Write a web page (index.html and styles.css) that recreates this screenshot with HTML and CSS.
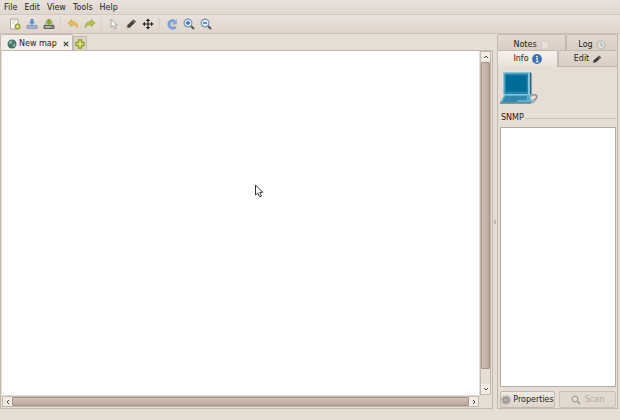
FILE: index.html
```html
<!DOCTYPE html>
<html lang="en">
<head>
  <meta charset="UTF-8" />
  <meta name="viewport" content="width=device-width, initial-scale=1.0" />
  <title>New map</title>
  <link rel="stylesheet" href="styles.css">
</head>
<body>

<nav class="menubar">
  <button>File</button>
  <button>Edit</button>
  <button>View</button>
  <button>Tools</button>
  <button>Help</button>
</nav>

<div class="toolbar">
  <button aria-label="New">
    <svg viewBox="0 0 12 12"><path d="M1.500 1h7.500v10h-7.500z" fill="#fafaf7" stroke="#aaa69e"/><path d="M3 3h4M3 5h3" stroke="#d2cfc9"/><circle cx="8.500" cy="8.500" r="3" fill="#9aa63a"/><path d="M8.500 7v3M7 8.500h3" stroke="#eef0b0"/></svg>
  </button>
  <button aria-label="Open">
    <svg viewBox="0 0 12 12"><path d="M1 7.500h10v3H1z" fill="#9fb4d2" stroke="#8d9cb2"/><path d="M1.500 7l2-3h5l2 3z" fill="#c9d7e8"/><path d="M4.500 1h3v3H9L6 7 3 4h1.500z" fill="#5f8cc8"/></svg>
  </button>
  <button aria-label="Save">
    <svg viewBox="0 0 12 12"><path d="M1 7.500h10v3H1z" fill="#8d9188" stroke="#5d6156"/><path d="M1.500 7l1.500-5h6l1.500 5z" fill="#b5bda0"/><path d="M4.500 1h3v3H9L6 7 3 4h1.500z" fill="#87a32c"/><path d="M2.500 9h5" stroke="#d8dccb"/></svg>
  </button>
  <span class="separator"></span>
  <button aria-label="Undo">
    <svg viewBox="0 0 12 12"><path d="M1 5l4-3.500v2.300c4 0 6 1.500 5.500 6.200C9.500 7.500 8 6.600 5 6.600v2.200z" fill="#e9bd4b" stroke="#d1a548" stroke-width=".7"/></svg>
  </button>
  <button aria-label="Redo">
    <svg viewBox="0 0 12 12"><path d="M11 5L7 1.500v2.300c-4 0-6 1.500-5.500 6.200C2.500 7.500 4 6.600 7 6.600v2.200z" fill="#b5c13f" stroke="#97a53d" stroke-width=".7"/></svg>
  </button>
  <span class="separator"></span>
  <button aria-label="Select">
    <svg viewBox="0 0 12 12"><path d="M3 1v8.500l2-1.800 1.500 3.300 1.700-.8-1.500-3.100h2.600z" fill="#f7f5f2" stroke="#a29d95" stroke-width=".9"/></svg>
  </button>
  <button aria-label="Draw">
    <svg viewBox="0 0 12 12"><path d="M1.500 10.500l1-3.500L8.500 1.500l2.500 2.300L5 9.500z" fill="#45413b"/><path d="M7.500 2.500l2.500 2.300" stroke="#9c978f"/><path d="M1.500 10.500l.6-2 1.400 1.400z" fill="#d8b98e"/></svg>
  </button>
  <button aria-label="Move">
    <svg viewBox="0 0 12 12"><path d="M6 2v8M2 6h8" stroke="#25221f" stroke-width="1.200"/><path d="M6 .5L8.200 3H3.800zM6 11.500L3.800 9h4.400zM.5 6L3 3.800v4.400zM11.500 6L9 8.200V3.800z" fill="#25221f"/></svg>
  </button>
  <span class="separator"></span>
  <button aria-label="Refresh">
    <svg viewBox="0 0 12 12"><path d="M9.500 8.800A3.700 3.700 0 1 1 8.800 3.400" fill="none" stroke="#7f9fd0" stroke-width="3"/><path d="M10.800 1v5.500H5.500z" fill="#8aa9d8"/></svg>
  </button>
  <button aria-label="Zoom in">
    <svg viewBox="0 0 12 12"><path d="M7.500 7.500l3.500 3.500" stroke="#57534e" stroke-width="2"/><circle cx="5" cy="5" r="3.900" fill="#dce8f5" stroke="#7c97b8" stroke-width="1.200"/><path d="M5 3v4M3 5h4" stroke="#2f6cb3" stroke-width="1.400"/></svg>
  </button>
  <button aria-label="Zoom out">
    <svg viewBox="0 0 12 12"><path d="M7.500 7.500l3.500 3.500" stroke="#57534e" stroke-width="2"/><circle cx="5" cy="5" r="3.900" fill="#dce8f5" stroke="#7c97b8" stroke-width="1.200"/><path d="M3 5h4" stroke="#2f6cb3" stroke-width="1.400"/></svg>
  </button>
</div>

<div class="workspace">
  <main class="editor">
    <div class="map-tabs">
      <div class="map-tab">
        <svg class="globe" viewBox="0 0 10 10"><circle cx="5" cy="5" r="4.500" fill="#47766f"/><path d="M2 2.500l2.500-1 1 1.500L4 5 2 4.500zM5.500 6l2-1.500 1 1.500-1.500 2.500z" fill="#8fb5a4"/></svg>
        <span>New map</span>
        <button class="tab-close" aria-label="Close tab">
          <svg viewBox="0 0 6 6"><path d="M.8.8l4.400 4.400M5.200.8L.8 5.200" stroke="#3a3632" stroke-width="1.100"/></svg>
        </button>
      </div>
      <button class="tab-add" aria-label="Add map">
        <svg viewBox="0 0 10 10"><path d="M3.500 1h3v2.500H9v3H6.500V9h-3V6.500H1v-3h2.500z" fill="#e3e58d" stroke="#93a02c" stroke-width="1.300"/></svg>
      </button>
    </div>
    <div class="map-frame">
      <div class="map-canvas">
        <svg class="pointer" viewBox="0 0 10 14"><path d="M1.500 1v10l2.300-2 1.700 3.800 2-.9-1.700-3.600h3z" fill="#fff" stroke="#33302d"/></svg>
      </div>
      <div class="scroll scroll-v">
        <button aria-label="Scroll up"><svg viewBox="0 0 6 6"><path d="M1 4l2-2 2 2" /></svg></button>
        <div class="thumb"></div>
        <button aria-label="Scroll down"><svg viewBox="0 0 6 6"><path d="M1 2l2 2 2-2" /></svg></button>
      </div>
      <div class="scroll scroll-h">
        <button aria-label="Scroll left"><svg viewBox="0 0 6 6"><path d="M4 1L2 3l2 2" /></svg></button>
        <div class="thumb"></div>
        <button aria-label="Scroll right"><svg viewBox="0 0 6 6"><path d="M2 1l2 2-2 2" /></svg></button>
      </div>
    </div>
  </main>

  <div class="splitter"></div>

  <aside class="sidebar">
    <div class="side-tabs side-tabs-back">
      <button>Notes
        <svg viewBox="0 0 10 10"><path d="M1.500 1h7v8h-7z" fill="#e6e0d9" stroke="#d3ccc3"/></svg>
      </button>
      <button>Log
        <svg viewBox="0 0 10 10"><circle cx="5" cy="5" r="4.200" fill="#dfdfd9" stroke="#b3b4ad"/><path d="M5 2.500V5l2 1" fill="none" stroke="#a5a8a1"/></svg>
      </button>
    </div>
    <div class="side-tabs side-tabs-front">
      <button class="active">Info
        <svg viewBox="0 0 10 10"><circle cx="5" cy="5" r="4.900" fill="#3871b5"/><circle cx="5" cy="2.600" r=".9" fill="#fff"/><path d="M4 4.500h1.300v3.200M3.800 7.800h2.800" fill="none" stroke="#fff"/></svg>
      </button>
      <button>Edit
        <svg viewBox="0 0 10 10"><path d="M1 9l.8-2.800L7 1.500l2.200 2L4 8.200z" fill="#403c37"/><path d="M6 2.500l2.200 2" stroke="#98938b"/></svg>
      </button>
    </div>
    <div class="side-body">
      <svg class="host" viewBox="0 0 38 32">
        <path d="M3 0h27v23H3z" fill="#8ac4da"/>
        <path d="M4.500 1.500H28V22H4.500z" fill="#2483aa"/>
        <path d="M6 3.500h20.500v16H6z" fill="#006c9a"/>
        <path d="M30 0l1.500 1.500V22L30 23z" fill="#20647f"/>
        <path d="M4.500 23H30l1.500 7.500H0z" fill="#5fb0ce"/>
        <path d="M5 25h22M4 27h23M3 29h14" stroke="#0b6088" stroke-width="1.200"/>
        <path d="M0 30.500h31.500v1H0z" fill="#175873"/>
        <path d="M30.500 24.500c1.500-2.500 6.500-2.500 6.500.4 0 2.300-2.500 2-3.500 4" fill="none" stroke="#8b979b" stroke-width="1.600"/>
        <path d="M31 29l3-1.500 1.500 1.500-2.500 2z" fill="#b6c3c7" stroke="#71848b" stroke-width=".6"/>
      </svg>
      <fieldset>
        <legend>SNMP</legend>
        <div class="snmp-view"></div>
      </fieldset>
      <div class="actions">
        <button>
          <svg viewBox="0 0 10 10"><circle cx="5" cy="5" r="4" fill="none" stroke="#a29f9a" stroke-width="1.600" stroke-dasharray="1.600 .9"/><circle cx="5" cy="5" r="2.500" fill="#b9b6b1" stroke="#9a9792" stroke-width="1.500"/></svg>
          Properties
        </button>
        <button disabled>
          <svg viewBox="0 0 10 10"><circle cx="4" cy="4" r="2.800" fill="#e6e1db" stroke="#a6a099" stroke-width="1.200"/><path d="M6 6l3 3" stroke="#a6a099" stroke-width="1.700"/></svg>
          Scan
        </button>
      </div>
    </div>
  </aside>
</div>

<footer class="statusbar"></footer>

</body>
</html>
```

FILE: styles.css
```css
:root {
  --bg: #e6ddd5;
  --light: #f1ece6;
  --tab: #dbd2c9;
  --line: #c3b9ae;
  --thumb-line: #a39487;
  --text: #1f1c19;
}

* {
  box-sizing: border-box;
}

body {
  margin: 0;
  height: 100vh;
  display: flex;
  flex-direction: column;
  background: var(--bg);
  color: var(--text);
  font-family: "DejaVu Sans", sans-serif;
  font-size: 8px;
  line-height: 10px;
}

button {
  display: flex;
  align-items: center;
  justify-content: center;
  margin: 0;
  padding: 0;
  border: none;
  background: none;
  color: inherit;
  font: inherit;
}

svg {
  display: block;
  flex: none;
}

.menubar {
  display: flex;
  gap: 7px;
  height: 15px;
  padding: 2px 4px 0;
  background: linear-gradient(#e8e0d9, #e1d8d0);
  border-bottom: 1px solid #d2c8be;
}

.toolbar {
  display: flex;
  align-items: center;
  height: 19px;
  padding: 0 6px;
  background: linear-gradient(#e9e1da, #dfd5cc);
  border-bottom: 1px solid #cdc2b8;
}

.toolbar button {
  width: 17px;
  height: 17px;
}

.toolbar svg {
  width: 12px;
  height: 12px;
}

.separator {
  width: 7px;
  height: 12px;
  background: linear-gradient(#d6ccc3, #d6ccc3) center / 1px 100% no-repeat;
}

.workspace {
  flex: 1;
  min-height: 0;
  display: flex;
}

.editor {
  flex: 1;
  min-width: 0;
  display: flex;
  flex-direction: column;
}

.map-tabs {
  display: flex;
  height: 16px;
}

.map-tab {
  display: flex;
  align-items: center;
  gap: 2px;
  width: 73px;
  padding: 3px 2px 0 6px;
  background: var(--light);
  border: 1px solid var(--line);
  border-bottom: none;
  border-radius: 2px 2px 0 0;
}

.globe {
  width: 10px;
  height: 10px;
}

.tab-close {
  width: 8px;
  height: 8px;
  margin-left: auto;
}

.tab-close svg,
.scroll svg {
  width: 6px;
  height: 6px;
}

.tab-add {
  width: 14px;
  margin-top: 2px;
  background: var(--tab);
  border: 1px solid var(--line);
  border-bottom: none;
}

.tab-add svg {
  width: 10px;
  height: 10px;
}

.map-frame {
  flex: 1;
  min-height: 0;
  display: grid;
  grid-template-columns: 1fr 11px;
  grid-template-rows: 1fr 11px;
  gap: 1px;
  padding: 0 1px 1px;
  border: 1px solid var(--line);
  background: var(--bg);
}

.map-canvas {
  position: relative;
  background: #fff;
}

/* mouse pointer floating over the map */
.pointer {
  position: absolute;
  left: 252px;
  top: 133px;
  width: 10px;
  height: 14px;
}

.scroll {
  display: flex;
  border: 1px solid #c3b8ad;
}

.scroll-v {
  flex-direction: column;
}

.scroll button {
  width: 9px;
  height: 10px;
  background: var(--light);
}

.scroll-h button {
  height: 9px;
}

.scroll path {
  fill: none;
  stroke: #4b4640;
}

.scroll .thumb {
  flex: 1;
  border: 1px solid var(--thumb-line);
  border-radius: 1px;
}

.scroll-v .thumb {
  margin-bottom: 15px;
  background: linear-gradient(to right, #d0c1b5, #bba99b);
}

.scroll-h .thumb {
  background: linear-gradient(#d0c1b5, #bba99b);
}

.splitter {
  width: 4px;
  background: linear-gradient(#c5bab0, #c5bab0) center / 2px 4px no-repeat;
}

.sidebar {
  width: 123px;
  display: flex;
  flex-direction: column;
  padding-right: 2px;
}

.side-tabs {
  display: grid;
  grid-template-columns: 69px 1fr;
  height: 16px;
}

.side-tabs button {
  gap: 3px;
  background: linear-gradient(#e2d9d1, #d8cec5);
  border: 1px solid var(--line);
  border-bottom: none;
  border-radius: 2px 2px 0 0;
}

.side-tabs-back button {
  padding-top: 4px;
}

.side-tabs svg,
.actions svg {
  width: 10px;
  height: 10px;
}

.side-tabs-front {
  grid-template-columns: 61px 1fr;
  height: 17px;
}

.side-tabs-front button {
  border-bottom: 1px solid var(--line);
}

.side-tabs-front .active {
  background: linear-gradient(#f6f2ee, #e9e1da);
  border-bottom: none;
}

.side-body {
  flex: 1;
  min-height: 0;
  display: flex;
  flex-direction: column;
  padding: 5px 1px 0 2px;
  border: 1px solid var(--line);
  border-top: none;
}

.host {
  width: 38px;
  height: 32px;
}

fieldset {
  flex: 1;
  min-height: 0;
  min-width: 0;
  margin: 9px 0 0;
  padding: 4px 0 0;
  border: none;
  border-top: 1px solid #cdc3b9;
}

legend {
  padding: 0 1px;
}

.snmp-view {
  height: 100%;
  background: #fff;
  border: 1px solid #b5aa9f;
}

.actions {
  display: grid;
  grid-template-columns: 55px 1fr;
  gap: 4px;
  margin-top: 4px;
}

.actions button {
  gap: 2px;
  height: 17px;
  background: linear-gradient(#f0eae5, #ddd4cb);
  border: 1px solid var(--line);
  border-radius: 2px;
}

.actions button:disabled {
  gap: 4px;
  background: #e1d8d0;
  border-color: #cbc1b7;
  color: #b5aba1;
}

.statusbar {
  height: 11px;
  background: var(--bg);
}
```
